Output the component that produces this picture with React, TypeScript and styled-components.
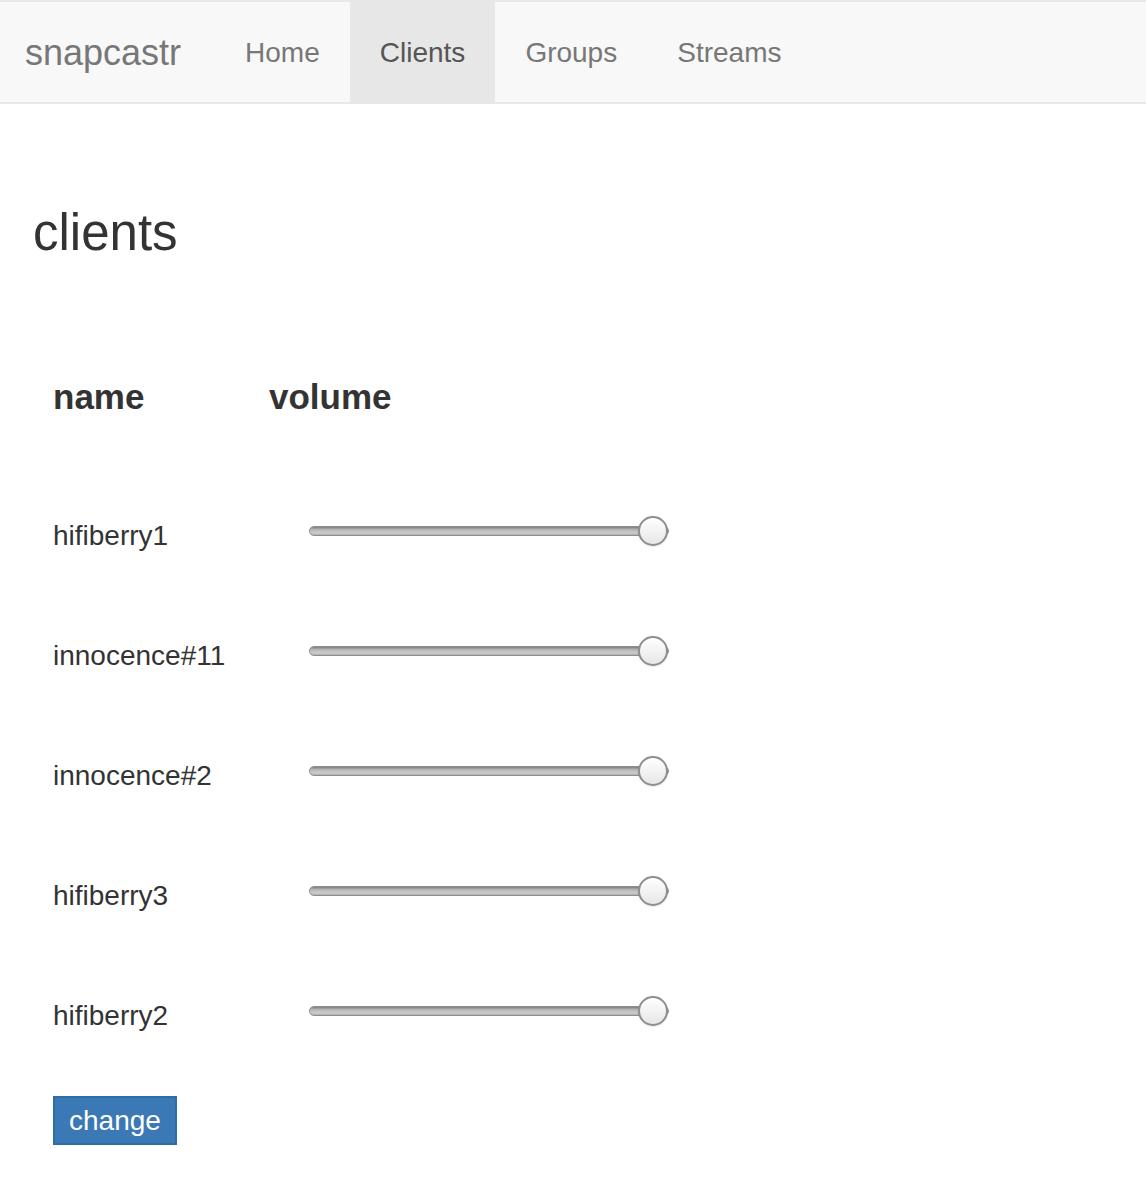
import React from 'react';
import styled, { createGlobalStyle } from 'styled-components';

const GlobalStyle = createGlobalStyle`
  body {
    margin: 0;
    background: #fff;
    font-family: "Liberation Sans", Arial, sans-serif;
    color: #333;
  }
`;

const Navbar = styled.nav`
  display: flex;
  align-items: stretch;
  height: 100px;
  background: #f8f8f8;
  border-top: 2px solid #e7e7e7;
  border-bottom: 2px solid #e7e7e7;
`;

const Brand = styled.a`
  display: flex;
  align-items: center;
  padding: 2px 34px 0 25px;
  font-size: 36px;
  color: #777;
  text-decoration: none;
`;

const NavLink = styled.a<{ $active?: boolean }>`
  display: flex;
  align-items: center;
  padding: 2px 30px 0;
  font-size: 28px;
  color: ${(p) => (p.$active ? '#555' : '#777')};
  background: ${(p) => (p.$active ? '#e7e7e7' : 'transparent')};
  text-decoration: none;
`;

const Main = styled.main`
  padding: 103px 0 0 33px;
`;

const Title = styled.h2`
  margin: 0;
  font-size: 51px;
  font-weight: 400;
  line-height: 1;
  color: #333;
`;

const Table = styled.div`
  margin: 121px 0 0 20px;
  display: grid;
  grid-template-columns: 216px auto;
  justify-content: start;
`;

const HeadCell = styled.div`
  font-size: 35px;
  font-weight: 700;
  line-height: 1;
  margin-bottom: 62px;
`;

const NameCell = styled.div`
  display: flex;
  align-items: center;
  height: 120px;
  font-size: 28px;
  line-height: 1;
`;

const VolumeCell = styled.div`
  display: flex;
  align-items: center;
  height: 120px;
  padding-left: 40px;
`;

const Slider = styled.input`
  -webkit-appearance: none;
  appearance: none;
  width: 360px;
  height: 30px;
  margin: 0 0 10px;
  background: transparent;

  &::-webkit-slider-runnable-track {
    height: 10px;
    border-radius: 5px;
    box-sizing: border-box;
    border: 1px solid #8c8c8c;
    background: linear-gradient(#808080, #b8b8b8 35%, #cacaca 70%, #b4b4b4);
  }

  &::-webkit-slider-thumb {
    -webkit-appearance: none;
    width: 30px;
    height: 30px;
    margin-top: -11px;
    box-sizing: border-box;
    border-radius: 50%;
    border: 2px solid #8e8e8e;
    background: linear-gradient(#ffffff, #f3f3f3 50%, #e6e6e6);
    box-shadow: 0 1px 2px rgba(0, 0, 0, 0.1);
  }
`;

const Button = styled.button`
  margin: 20px 0 0 20px;
  height: 49px;
  padding: 0 14px;
  border: 2px solid #2e6da4;
  background: #3b78b6;
  color: #fff;
  font-family: "Liberation Sans", Arial, sans-serif;
  font-size: 28px;
  line-height: 45px;
  cursor: pointer;
`;

const clients = ['hifiberry1', 'innocence#11', 'innocence#2', 'hifiberry3', 'hifiberry2'];

const App = () => (
  <>
    <GlobalStyle />
    <Navbar>
      <Brand href="#">snapcastr</Brand>
      <NavLink href="#">Home</NavLink>
      <NavLink href="#" $active>
        Clients
      </NavLink>
      <NavLink href="#">Groups</NavLink>
      <NavLink href="#">Streams</NavLink>
    </Navbar>
    <Main>
      <Title>clients</Title>
      <Table>
        <HeadCell>name</HeadCell>
        <HeadCell>volume</HeadCell>
        {clients.map((name) => (
          <React.Fragment key={name}>
            <NameCell>{name}</NameCell>
            <VolumeCell>
              <Slider type="range" min={0} max={100} defaultValue={100} />
            </VolumeCell>
          </React.Fragment>
        ))}
      </Table>
      <Button>change</Button>
    </Main>
  </>
);

export default App;
